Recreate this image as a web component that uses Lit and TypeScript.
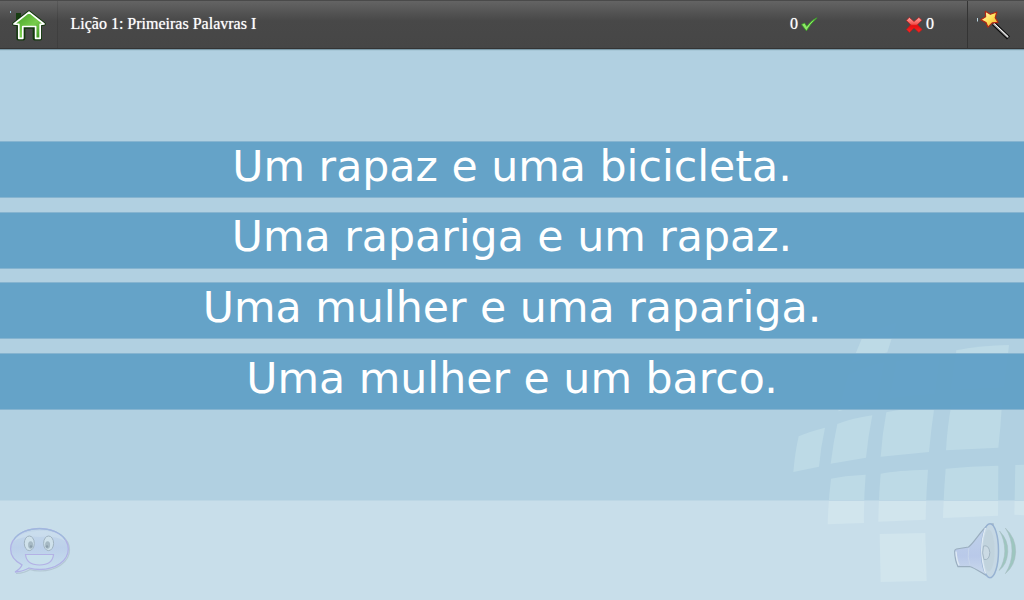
import { LitElement, html, css, svg } from 'lit';
import { customElement, property } from 'lit/decorators.js';

const TILES = [
  'M246 55 Q290 25 350 8 L322 97 Q270 112 215 128 Z',
  'M529 91 Q605 76 687 75 L672 202 L512 210 Z',
  'M205 165 Q255 140 312 127 L291 243 Q230 258 175 274 Z',
  'M350 125 Q415 106 480 99 L465 221 Q390 226 328 235 Z',
  'M56 349 Q90 334 135 323 Q122 382 117 440 L40 456 Q45 397 56 349 Z',
  'M172 312 Q215 295 277 286 Q264 350 258 413 L152 431 Q160 367 172 312 Z',
  'M319 277 Q360 267 463 262 Q453 330 447 396 L302 410 Q307 340 319 277 Z',
  'M514 256 L666 250 Q662 320 655 383 L498 391 Q502 320 514 256 Z',
  'M153 476 Q190 467 257 464 Q251 535 252 609 L143 613 Q145 540 153 476 Z',
  'M302 461 Q350 451 444 449 Q438 525 437 599 L295 605 Q296 530 302 461 Z',
  'M497 446 Q570 439 655 437 L654 587 L489 594 Q491 520 497 446 Z',
  'M706 435 L732 434 L732 586 L703 584 Z',
  'M299 642 L436 639 L440 783 L302 786 Z',
];

@customElement('lesson-header')
class LessonHeader extends LitElement {
  static styles = css`
    :host {
      display: flex;
      flex: none;
      height: 49px;
      box-sizing: border-box;
      border-top: 1px solid #4a4a4a;
      border-bottom: 1px solid #343434;
      background: linear-gradient(#646464, #484848 42%, #464646);
      box-shadow: 0 1px 1px #7a99a8;
      color: #fff;
      font: 16px/19px "Liberation Serif", serif;
      z-index: 1;
    }
    .home {
      width: 57px;
      border-right: 1px solid rgba(0, 0, 0, 0.1);
    }
    .title {
      flex: 1;
      padding: 13px 0 0 12.5px;
      text-shadow: 0 0 1px rgba(255, 255, 255, 0.7);
    }
    .score {
      display: flex;
      gap: 3px;
      padding-top: 13px;
      text-shadow: 0 0 1px rgba(255, 255, 255, 0.7);
    }
    .right {
      width: 115px;
    }
    .wrong {
      width: 62px;
    }
    .score svg {
      flex: none;
      margin-top: 2px;
    }
    .wand {
      width: 56px;
      border-left: 1px solid #343434;
    }
    svg {
      display: block;
    }
  `;

  @property() title = '';
  @property({ type: Number }) right = 0;
  @property({ type: Number }) wrong = 0;

  render() {
    return html`
      <div class="home">
        <svg width="57" height="47" viewBox="0 1 57 47">
          <defs>
            <linearGradient id="roof" x2="1" y2="1">
              <stop offset="0" stop-color="#3c9a20" />
              <stop offset=".55" stop-color="#78cc4c" />
              <stop offset="1" stop-color="#338c18" />
            </linearGradient>
          </defs>
          <path d="M10.5 11v2" stroke="#9cc4d6" />
          <path d="M16 13h5v8h-5z" fill="#173d12" />
          <path d="M29 12.2 L44 24 L40.2 24.4 V38.7 H34.5 V27 H23.5 V38.7 H18.2 V24.4 L14 24 Z"
            fill="none" stroke="#12380c" stroke-width="3.6" stroke-linejoin="round" />
          <path d="M29 12.2 L44 24 L40.2 24.4 V38.3 H35.6 V26.5 H22.8 V38.3 H18.8 V24.4 L14 24 Z"
            fill="url(#roof)" stroke="#fff" stroke-width="1.7" stroke-linejoin="round" />
        </svg>
      </div>
      <div class="title">${this.title}</div>
      <div class="score right">
        <span>${this.right}</span>
        <svg width="18" height="16" viewBox="802 16 18 16">
          <path d="M802.6 24.6 L805.5 23 L807.8 26.4 Q812 20.5 818 17.8 Q811.5 23.5 807.4 30.8 Z"
            fill="#8fe868" stroke="#3aa524" stroke-width=".8" />
        </svg>
      </div>
      <div class="score wrong">
        <svg width="18" height="17" viewBox="905 16 18 17">
          <defs>
            <linearGradient id="cross" x2="0" y2="1">
              <stop offset="0" stop-color="#ffaaa5" />
              <stop offset=".45" stop-color="#f4514c" />
              <stop offset=".55" stop-color="#e60e0e" />
              <stop offset="1" stop-color="#f62a28" />
            </linearGradient>
          </defs>
          <path d="M909.3 17.4 L914 21.6 L918.9 17.4 L921.9 20.2 L917.4 24.7 L922.1 29.5 L918.9 32.4 L914 28 L909.4 32.4 L906.4 29.4 L910.7 24.8 L906.4 20.4 Z"
            fill="url(#cross)" stroke="#c01818" stroke-width=".7" stroke-linejoin="round" />
        </svg>
        <span>${this.wrong}</span>
      </div>
      <div class="wand">
        <svg width="56" height="47" viewBox="968 1 56 47">
          <defs>
            <linearGradient id="star" x2="1" y2="1">
              <stop offset="0" stop-color="#fffbd0" />
              <stop offset=".5" stop-color="#ffe35a" />
              <stop offset="1" stop-color="#f5a628" />
            </linearGradient>
          </defs>
          <path d="M977.5 18v3.5" stroke="#b9d3df" />
          <path d="M993.5 23.5 L1008.5 38" stroke="#0a0a0a" stroke-width="4.4" />
          <path d="M993.5 23.5 L1008 37.4" stroke="#a8a8a8" stroke-width="2" />
          <path d="M994 23.3 L1008.3 36.8" stroke="#fff" stroke-width="1" />
          <path d="M985.3 11.3 L990.4 14.3 L996.8 12 L995.2 17.8 L998 22.3 L992.3 22.9 L988 27.2 L986 22.6 L980.8 19.8 L985.6 16.8 Z"
            fill="url(#star)" stroke="#b02814" stroke-width="1.2" stroke-linejoin="round" />
        </svg>
      </div>
    `;
  }
}

@customElement('app-root')
class AppRoot extends LitElement {
  static styles = css`
    :host {
      display: flex;
      flex-direction: column;
      position: relative;
      height: 600px;
      overflow: hidden;
      background: #b1d0e1;
    }
    .globe {
      position: absolute;
      right: 0;
      bottom: 0;
    }
    .phrases {
      position: relative;
      flex: 1;
      display: flex;
      flex-direction: column;
      gap: 13.67px;
      padding-top: 92px;
    }
    .phrase {
      height: 57px;
      box-sizing: border-box;
      padding-top: 0.8px;
      border: solid #86b4d0;
      border-width: 1px 0;
      background: rgba(98, 161, 199, 0.97);
      color: #fff;
      font: 42.67px/47.6px "DejaVu Sans", sans-serif;
      text-align: center;
      white-space: nowrap;
    }
    .tools {
      position: relative;
      flex: none;
      display: flex;
      justify-content: space-between;
      height: 100px;
      box-sizing: border-box;
      border-top: 1px solid #bdd7e5;
      background: rgba(255, 255, 255, 0.3);
      background-clip: padding-box;
    }
    svg {
      display: block;
    }
  `;

  static properties = {
    phrases: { type: Array },
  };

  phrases: string[];

  constructor() {
    super();
    this.phrases = [
      'Um rapaz e uma bicicleta.',
      'Uma rapariga e um rapaz.',
      'Uma mulher e uma rapariga.',
      'Uma mulher e um barco.',
    ];
  }

  face() {
    return html`
      <svg width="80" height="99" viewBox="0 501 80 99">
        <defs>
          <linearGradient id="bubble" x2="0" y2="1">
            <stop offset="0" stop-color="#c3d8ea" />
            <stop offset=".45" stop-color="#bcd0ea" />
            <stop offset="1" stop-color="#c8e0ee" />
          </linearGradient>
        </defs>
        <path d="M40 529.5 C57 529.5 69.5 538 69.5 550 C69.5 562 56 571 40 571 Q34 571 30 569.5 Q25 573 16 573.5"
          fill="none" stroke="#9fb2bf" stroke-width="1.2" opacity=".5" />
        <path d="M39.5 528.5 C56 528.5 68.3 537.5 68.3 549 C68.3 560.5 56 569.5 40 569.5 Q34 569.5 29 568 Q23 571.5 15 572 Q20.5 569 22 564.8 C14.5 561 10.6 555.5 10.6 549 C10.6 537.5 23 528.5 39.5 528.5 Z"
          fill="url(#bubble)" stroke="#b0b1e5" stroke-width="1.3" />
        <path d="M14 541 C19 528.5 60 526 65 541 Q54 535 40 537 Q24 535 14 541 Z" fill="#d2e3ef" opacity=".5" />
        <path d="M14 539.5 C23 525 56 525 65 539.5" fill="none" stroke="#9db9dc" stroke-width="1.1" />
        <ellipse cx="29.3" cy="543.3" rx="5" ry="7.3" fill="#cfe1eb" stroke="#a1b4c1" />
        <ellipse cx="48.6" cy="543.3" rx="5" ry="7.3" fill="#cfe1eb" stroke="#a1b4c1" />
        <ellipse cx="30.6" cy="545" rx="2.5" ry="3.7" fill="#a6b9c4" />
        <ellipse cx="47.6" cy="545" rx="2.5" ry="3.7" fill="#a6b9c4" />
        <circle cx="31" cy="546.5" r="1.2" fill="#8c9fab" />
        <circle cx="47" cy="546.5" r="1.2" fill="#8c9fab" />
        <path d="M25.5 554.5 H53.5 Q52.5 565 39.5 565 Q26.5 565 25.5 554.5 Z" fill="#c8e0ec" stroke="#b3b1e5" stroke-width="1.2" />
      </svg>
    `;
  }

  speaker() {
    return html`
      <svg width="80" height="99" viewBox="944 501 80 99">
        <defs>
          <linearGradient id="horn" x2="0" y2="1">
            <stop offset="0" stop-color="#c0d3ea" />
            <stop offset=".6" stop-color="#b9c9e9" />
            <stop offset="1" stop-color="#ccdcec" />
          </linearGradient>
        </defs>
        <path d="M954.7 551 Q954.7 549.4 956.5 549 L968.5 547 C974 543 981 530 988.5 524.5 L993 524 L991 577.5 C986 576.5 977 568.5 969.5 566.5 L958 566.7 Q954.7 560 954.7 551 Z"
          fill="url(#horn)" stroke="#9aaebf" stroke-width="1.2" />
        <path d="M956 551.5 Q956.5 560 959 565.3" fill="none" stroke="#deeaf3" stroke-width="1.4" />
        <path d="M968.8 548 Q967 557 970 565.5" fill="none" stroke="#c8d6ec" />
        <ellipse cx="990" cy="550.7" rx="8.5" ry="27" fill="#c6d8e4" stroke="#97b2d2" stroke-width="1.5" />
        <path d="M985.5 528 Q978 549 985.5 573.5" fill="none" stroke="#dfeaf3" stroke-width="1.4" />
        <ellipse cx="988.8" cy="550.5" rx="5.8" ry="21" fill="#bfd1da" opacity=".7" />
        <path d="M983.5 546 Q989 544.5 989.8 552.5 Q989.5 560.5 984 559.5 Q981.5 553 983.5 546 Z" fill="#cbdae4" stroke="#a4b7c4" />
        <path d="M999.5 531 Q1008.5 540 1007.8 552 Q1007 565 999 570.5 Q1004.5 562 1004.8 551 Q1004.5 539 999.5 531 Z" fill="#9dc6bf" stroke="#a6bac1" stroke-width=".5" />
        <path d="M1005.3 528 Q1016 538 1015.7 552 Q1015 566 1005.3 573.7 Q1012 563 1012 551 Q1012 538 1005.3 528 Z" fill="#9dc6bf" stroke="#a6bac1" stroke-width=".5" />
      </svg>
    `;
  }

  render() {
    return html`
      <svg class="globe" width="244" height="280" viewBox="0 0 732 840">
        ${TILES.map((d) => svg`<path d=${d} fill="#bddae6" />`)}
      </svg>
      <lesson-header title="Lição 1: Primeiras Palavras I"></lesson-header>
      <div class="phrases">
        ${this.phrases.map((phrase) => html`<div class="phrase">${phrase}</div>`)}
      </div>
      <div class="tools">
        ${this.face()}
        ${this.speaker()}
      </div>
    `;
  }
}
